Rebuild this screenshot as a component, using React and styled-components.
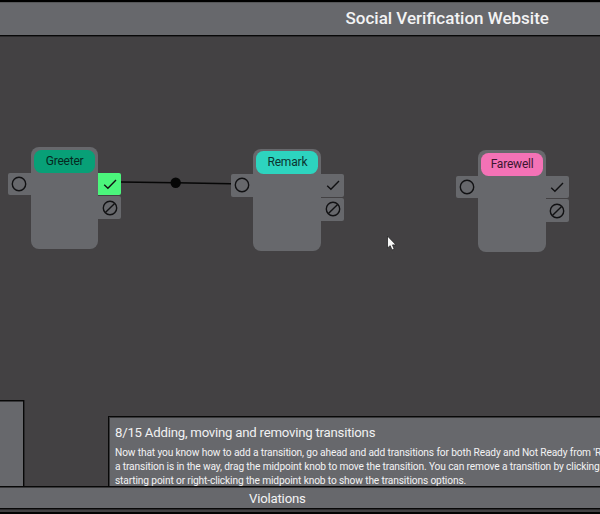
import React from "react";
import styled, { createGlobalStyle } from "styled-components";

const GlobalStyle = createGlobalStyle`
  * { box-sizing: border-box; }
  body { margin: 0; background: #000; font-family: Roboto, "Liberation Sans", sans-serif; }
`;

const Page = styled.div`
  width: 600px;
  height: 514px;
  overflow: hidden;
  display: flex;
  flex-direction: column;
  background: #434143;
  border-top: 2px solid #000;
  border-bottom: 2px solid #030303;
`;

const Header = styled.header`
  height: 34px;
  flex: none;
  padding-left: 345.5px;
  background: #67686c;
  border-top: 1px solid #555658;
  border-bottom: 1px solid #080808;
  box-shadow: 0 1px 0 #2b2a2c;
`;

const Title = styled.h1`
  margin: 0;
  font-size: 17px;
  font-weight: 500;
  line-height: 30px;
  white-space: nowrap;
  color: #f3f3f4;
`;

const Canvas = styled.main`
  position: relative;
  flex: 1;
  display: flex;
  align-items: flex-end;
  min-height: 0;
`;

const SidePanel = styled.aside`
  width: 24px;
  height: 86px;
  flex: none;
  background: #67686c;
  border-top: 1px solid #080808;
  border-right: 1px solid #080808;
  box-shadow: inset 0 1px 0 #38383a, 1px 0 0 #2b2a2c;
`;

const Tutorial = styled.section`
  flex: 1;
  min-width: 0;
  height: 70px;
  margin-left: 84px;
  padding: 7px 0 0 6px;
  overflow: hidden;
  background: #67686c;
  border-top: 1px solid #080808;
  border-left: 1px solid #080808;
  box-shadow: inset 1px 1px 0 #38383a;
`;

const TutorialTitle = styled.h2`
  margin: 0;
  font-size: 13.2px;
  font-weight: 400;
  line-height: 17px;
  letter-spacing: -0.22px;
  white-space: nowrap;
  color: #f1f1f2;
`;

const TutorialText = styled.p`
  margin: 5px 0 0;
  font-size: 10.2px;
  line-height: 14.1px;
  letter-spacing: -0.135px;
  white-space: pre;
  color: #f3f3f4;
`;

const Violations = styled.footer`
  height: 23px;
  flex: none;
  padding-left: 249px;
  font-size: 13.2px;
  line-height: 21px;
  padding-top: 1px;
  letter-spacing: -0.2px;
  color: #f3f3f4;
  background: #67686c;
  border-top: 1px solid #080808;
  border-bottom: 1px solid #080808;
  box-shadow: inset 0 1px 0 #38383a, 0 1px 0 #2b2a2c;
`;

const BottomEdge = styled.div`
  height: 3px;
  flex: none;
`;

const Link = styled.svg`
  position: absolute;
  left: 120px;
  top: 138px;
`;

const NodeBox = styled.div`
  position: absolute;
  left: ${(p) => p.$x}px;
  top: ${(p) => p.$y}px;
  display: flex;
  align-items: flex-start;
`;

const NodeBody = styled.div`
  width: 67.8px;
  height: 102px;
  padding: 2.3px 3px;
  border-radius: 8px;
  background: #67686c;
`;

const NodeName = styled.div`
  height: 23px;
  border-radius: 7.5px;
  background: ${(p) => p.$color};
  color: ${(p) => p.$ink};
  font-size: 12px;
  line-height: 22.5px;
  letter-spacing: -0.2px;
  text-align: center;
`;

const Ports = styled.div`
  display: flex;
  flex-direction: column;
  gap: 1.2px;
  padding-top: 25.2px;
`;

const Port = styled.div`
  width: 22.6px;
  height: 22.6px;
  display: grid;
  place-items: center;
  border-radius: ${(p) => (p.$side === "left" ? "2px 0 0 2px" : "0 2px 2px 0")};
  background: ${(p) => (p.$active ? "#4bf67c" : "#67686c")};
`;

const Glyph = styled.svg`
  display: block;
  fill: none;
  stroke: #111113;
`;

const Cursor = styled.svg`
  position: absolute;
  left: 386px;
  top: 199px;
`;

const Icon = ({ kind }) => (
  <Glyph width="18" height="18" viewBox="0 0 18 18" strokeWidth="1.4">
    {kind === "check" ? (
      <path d="M3.2 9.8 L6.9 13.3 L15 4.9" />
    ) : (
      <circle cx="9" cy="9" r="6.7" />
    )}
    {kind === "ban" && <path d="M4.4 13.6 L13.6 4.4" />}
  </Glyph>
);

const nodes = [
  { name: "Greeter", x: 8.1, y: 111.4, color: "#08a077", ink: "#06291f", active: true },
  { name: "Remark", x: 230.9, y: 113, color: "#2dd4bf", ink: "#0b332f" },
  { name: "Farewell", x: 455.6, y: 114.4, color: "#f472b6", ink: "#3c1730" },
];

const StateNode = ({ node }) => (
  <NodeBox $x={node.x} $y={node.y}>
    <Ports>
      <Port $side="left"><Icon kind="circle" /></Port>
    </Ports>
    <NodeBody>
      <NodeName $color={node.color} $ink={node.ink}>{node.name}</NodeName>
    </NodeBody>
    <Ports>
      <Port $active={node.active}><Icon kind="check" /></Port>
      <Port><Icon kind="ban" /></Port>
    </Ports>
  </NodeBox>
);

const steps = [
  "Now that you know how to add a transition, go ahead and add transitions for both Ready and Not Ready from 'R",
  "a transition is in the way, drag the midpoint knob to move the transition. You can remove a transition by clicking",
  "starting point or right-clicking the midpoint knob to show the transitions options.",
].join("\n");

export default function App() {
  return (
    <>
      <GlobalStyle />
      <Page>
        <Header>
          <Title>Social Verification Website</Title>
        </Header>
        <Canvas>
          <SidePanel />
          <Tutorial>
            <TutorialTitle>8/15 Adding, moving and removing transitions</TutorialTitle>
            <TutorialText>{steps}</TutorialText>
          </Tutorial>
          {nodes.map((node) => (
            <StateNode key={node.name} node={node} />
          ))}
          <Link width="111" height="20" viewBox="0 0 111 20">
            <path d="M1 8.1 L55.7 8.8 L111 9.7" stroke="#060606" strokeWidth="1.5" fill="none" />
            <circle cx="55.7" cy="8.8" r="5.2" fill="#060606" />
          </Link>
          <Cursor width="12" height="18" viewBox="0 0 12 18">
            <path
              d="M1.5 1 V13 L4.2 10.7 L6 15 L8.2 14 L6.5 9.9 H10 Z"
              fill="#f7f7f7"
              stroke="#242426"
              strokeWidth="0.8"
            />
          </Cursor>
        </Canvas>
        <Violations>Violations</Violations>
        <BottomEdge />
      </Page>
    </>
  );
}
